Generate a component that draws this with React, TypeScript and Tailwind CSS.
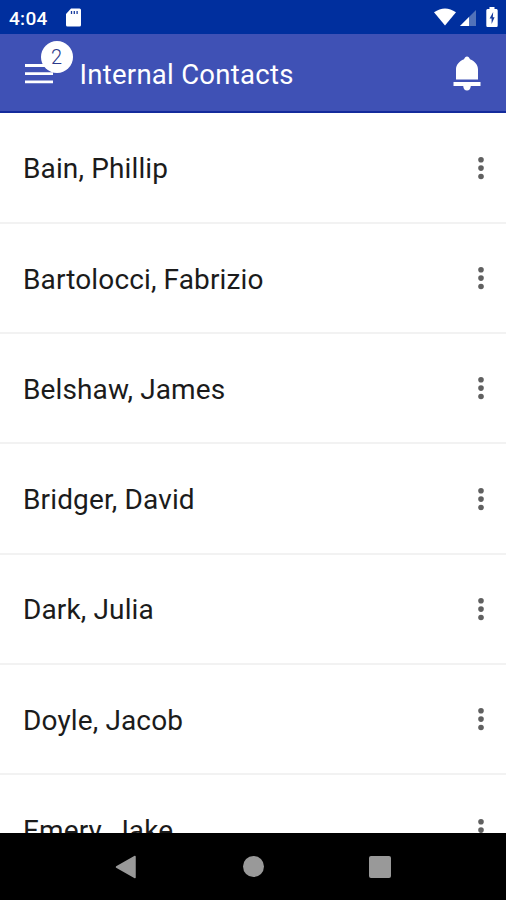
const contacts = [
  'Bain, Phillip',
  'Bartolocci, Fabrizio',
  'Belshaw, James',
  'Bridger, David',
  'Dark, Julia',
  'Doyle, Jacob',
  'Emery, Jake',
];

function StatusBar() {
  return (
    <div className="flex h-[34px] shrink-0 items-center bg-[#002f9e] pr-[8px] pl-[9px] text-white">
      <span className="w-[56px] pt-[2px] text-[19px] leading-none font-medium tracking-[0.3px]">4:04</span>
      <svg className="h-[19px] w-[17px]" viewBox="0 0 17 19">
        <path d="M6 0.5H14.5Q16 0.5 16 2V17Q16 18.5 14.5 18.5H2.5Q1 18.5 1 17V6Z" fill="#fff" />
        <path d="M6.5 3v3M9.3 3v3M12.1 3v3" stroke="#173b9d" strokeWidth="1.3" />
      </svg>
      <div className="grow" />
      <svg className="h-[18px] w-[42px]" viewBox="0 0 42 18">
        <path d="M0 4.3Q11 -3.3 22 4.3L11 17.5Z" fill="#fff" />
        <path d="M26 18L42 2V18Z" fill="#5272b9" />
        <path d="M26 18L35 9V18Z" fill="#fff" />
      </svg>
      <svg className="ml-[10px] h-[20px] w-[12px]" viewBox="0 0 12 20">
        <path d="M3.5 0H8.5V2H10.5Q11.7 2 11.7 3.5V18.5Q11.7 20 10.5 20H1.5Q0.3 20 0.3 18.5V3.5Q0.3 2 1.5 2H3.5Z" fill="#fff" />
        <path d="M7.2 5L3.6 11.5H5.6V17L8.6 10.2H6.8Z" fill="#173b9d" />
      </svg>
    </div>
  );
}

function Header() {
  return (
    <header className="flex h-[79px] shrink-0 items-center border-b-2 border-[#142b9c] bg-[#3f51b5] pt-[2px] pr-[25px] pl-[25px] text-white">
      <div className="relative mr-[26.5px] h-[20px] w-[28px]">
        <svg className="h-[20px] w-[28px]" viewBox="0 0 28 20">
          <path d="M0 1.5H28M0 9.7H28M0 17.8H28" stroke="#fff" strokeWidth="2.8" />
        </svg>
        <span className="absolute -top-[23px] left-[15.5px] flex h-[32px] w-[32px] items-center justify-center rounded-full bg-white text-[20px] leading-none font-light text-[#2c3a8c]">
          2
        </span>
      </div>
      <h1 className="grow pt-[3px] text-[27.5px] leading-none font-normal tracking-[0.27px] whitespace-nowrap">
        Internal Contacts
      </h1>
      <svg className="h-[35px] w-[28px]" viewBox="0 0 28 35">
        <path
          d="M14 0.5C15.4 0.5 16.4 1.6 17 3.3C22 5.4 25 9 25 13.5V23.5H3V13.5C3 9 6 5.4 11 3.3C11.6 1.6 12.6 0.5 14 0.5Z"
          fill="#fff"
        />
        <path d="M0.5 26H27.5V30H17.8Q17.3 34.5 14 34.5Q10.7 34.5 10.2 30H0.5Z" fill="#fff" />
      </svg>
    </header>
  );
}

function ContactRow({ name }: { name: string }) {
  return (
    <li className="flex h-[110.3px] shrink-0 items-center justify-between border-b-2 border-[#f2f2f2] pr-[21px] pl-[23px]">
      <span className="pt-[3px] text-[28px] leading-none tracking-[0.13px] text-[#1b1b1b]">{name}</span>
      <svg className="h-[24px] w-[8px]" viewBox="0 0 8 24">
        <g fill="#606060">
          <circle cx="4" cy="3.7" r="2.8" />
          <circle cx="4" cy="12.1" r="2.8" />
          <circle cx="4" cy="20.5" r="2.8" />
        </g>
      </svg>
    </li>
  );
}

function NavigationBar() {
  return (
    <nav className="flex h-[67px] shrink-0 items-center bg-black pl-[115px]">
      <svg className="h-[24px] w-[21px]" viewBox="0 0 21 24">
        <path d="M20 1.5V22.5L1.5 12Z" fill="#999" stroke="#999" strokeWidth="1.5" strokeLinejoin="round" />
      </svg>
      <div className="ml-[107px] h-[21px] w-[21px] rounded-full bg-[#999]" />
      <div className="ml-[105px] h-[22px] w-[22px] rounded-[2px] bg-[#999]" />
    </nav>
  );
}

export default function App() {
  return (
    <div className="flex h-[900px] w-[506px] flex-col overflow-hidden bg-white font-[Roboto,sans-serif]">
      <StatusBar />
      <Header />
      <ul className="flex min-h-0 grow flex-col overflow-hidden pt-[0.6px]">
        {contacts.map((name) => (
          <ContactRow key={name} name={name} />
        ))}
      </ul>
      <NavigationBar />
    </div>
  );
}
